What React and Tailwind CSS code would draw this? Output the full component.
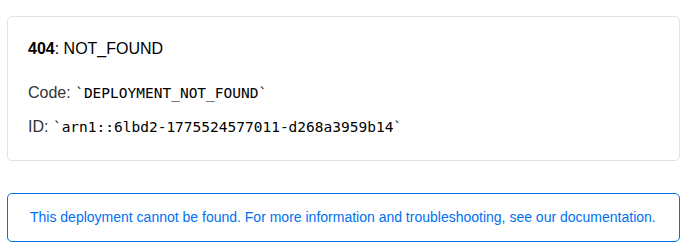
export default function App() {
  return (
    <div className="min-h-screen bg-white font-['Liberation_Sans',Arial,sans-serif] px-[7px] pt-[16px]">
      <div className="border border-[#e2e2e2] rounded-[5px] h-[145px] px-[20px] pt-[22px]">
        <div className="text-[16px] text-black leading-[20px]">
          <span className="font-bold">404</span>: NOT_FOUND
        </div>
        <div className="mt-[24px] text-[16px] text-[#333] leading-[20px]">
          Code:{" "}
          <code className="font-['DejaVu_Sans_Mono',monospace] text-[14.5px] text-black">
            `DEPLOYMENT_NOT_FOUND`
          </code>
        </div>
        <div className="mt-[14px] text-[16px] text-[#333] leading-[20px]">
          ID:{" "}
          <code className="font-['DejaVu_Sans_Mono',monospace] text-[14.5px] text-black">
            `arn1::6lbd2-1775524577011-d268a3959b14`
          </code>
        </div>
      </div>
      <div className="mt-[32px] border border-[#0070f3] rounded-[5px] h-[49px] flex items-center px-[22px] text-[14px] text-[#0070f3]">
        This deployment cannot be found. For more information and troubleshooting, see our documentation.
      </div>
    </div>
  );
}
